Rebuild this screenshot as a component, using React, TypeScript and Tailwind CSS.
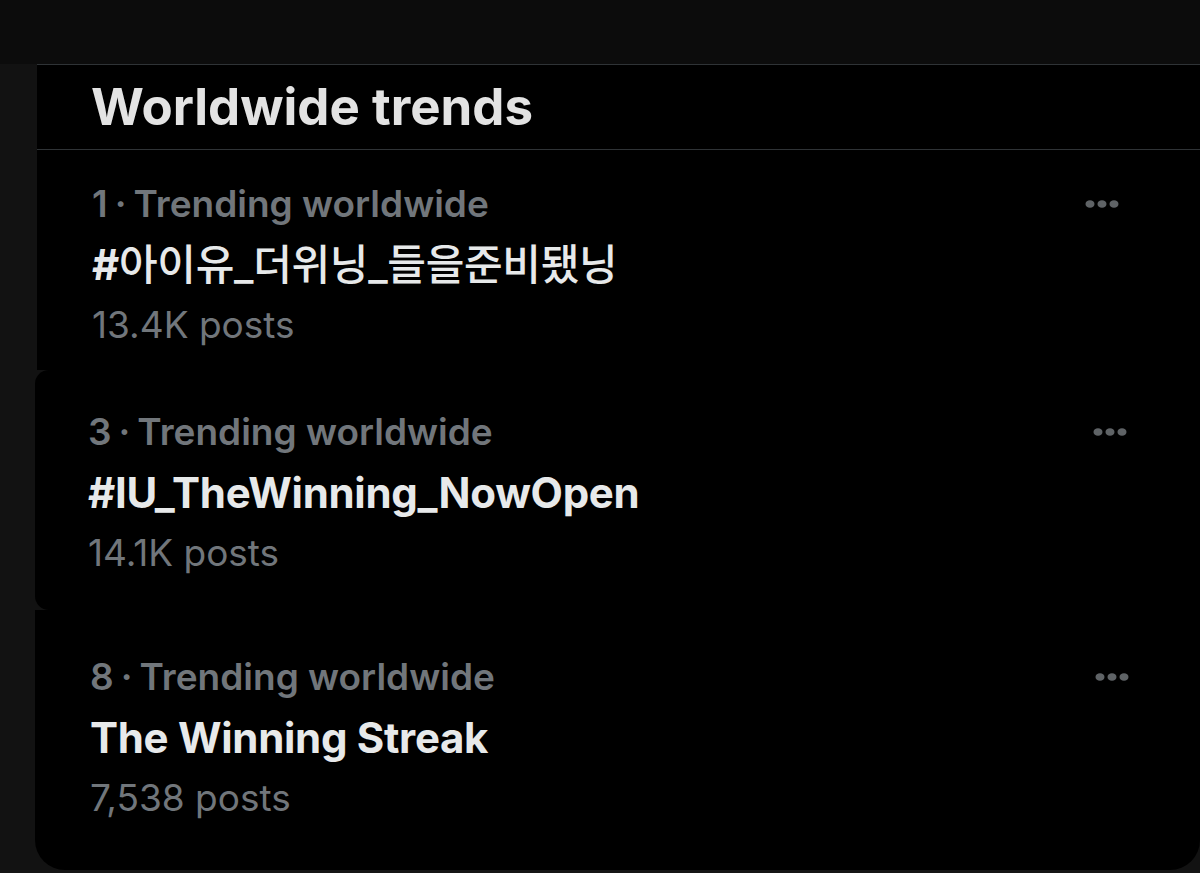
import React from "react";

const Dots = () => (
  <svg width="36" height="10" viewBox="0 0 36 10" className="shrink-0">
    <ellipse cx="6" cy="5" rx="4.5" ry="3.8" fill="#5f6366" />
    <ellipse cx="18" cy="5" rx="4.5" ry="3.8" fill="#5f6366" />
    <ellipse cx="30" cy="5" rx="4.5" ry="3.8" fill="#5f6366" />
  </svg>
);

type Trend = { rank: number; name: React.ReactNode; posts: string };

const TrendRow = ({ t, dotsRight }: { t: Trend; dotsRight: string }) => (
  <div className="flex items-start justify-between">
    <div className="flex flex-col">
      <div className="h-[60px] flex items-center text-[37px] font-semibold text-[#71767b] tracking-[0px] whitespace-nowrap">
        {t.rank}<span className="mx-[7px]">·</span>Trending worldwide
      </div>
      <div className="h-[61px] flex items-center text-[42px] font-bold text-[#e7e9ea] tracking-[-0.3px] whitespace-nowrap">
        {t.name}
      </div>
      <div className="h-[60px] flex items-center text-[37px] font-normal text-[#71767b] whitespace-nowrap">
        {t.posts}
      </div>
    </div>
    <div className={`h-[60px] flex items-center ${dotsRight}`}>
      <Dots />
    </div>
  </div>
);

export default function App() {
  return (
    <div
      className="w-[1200px] h-[873px] bg-[#121212] flex flex-col overflow-hidden"
      style={{ fontFamily: 'Inter, "Noto Sans CJK KR", sans-serif' }}
    >
      <div className="h-[64px] shrink-0 bg-[#0c0c0c]" />
      <div className="ml-[37px] h-[306px] shrink-0 bg-black border-t border-[#2f3336]">
        <div className="h-[85px] border-b border-[#2f3336] flex items-center pl-[54px] text-[51px] font-bold text-[#e3e3e3] whitespace-nowrap">
          Worldwide trends
        </div>
        <div className="pl-[55px] pt-[24px]">
          <TrendRow
            t={{
              rank: 1,
              name: (
                <>
                  #<span className="font-medium">아이유_더위닝_들을준비됐닝</span>
                </>
              ),
              posts: "13.4K posts",
            }}
            dotsRight="mr-[80px]"
          />
        </div>
      </div>
      <div className="ml-[35px] h-[240px] shrink-0 bg-black rounded-tl-[14px] rounded-bl-[14px]">
        <div className="pl-[53px] pt-[32px]">
          <TrendRow t={{ rank: 3, name: "#IU_TheWinning_NowOpen", posts: "14.1K posts" }} dotsRight="mr-[72px]" />
        </div>
      </div>
      <div className="ml-[35px] h-[260px] shrink-0 bg-black rounded-bl-[30px] rounded-br-[30px]">
        <div className="pl-[55px] pt-[37px]">
          <TrendRow t={{ rank: 8, name: "The Winning Streak", posts: "7,538 posts" }} dotsRight="mr-[70px]" />
        </div>
      </div>
      <div className="flex-1 bg-[#151515]" />
    </div>
  );
}
